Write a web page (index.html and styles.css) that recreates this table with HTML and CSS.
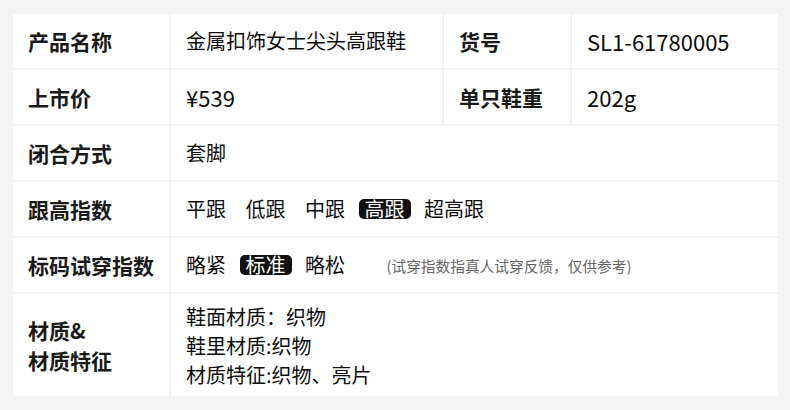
FILE: index.html
```html
<!DOCTYPE html>
<html lang="zh-CN">
<head>
<meta charset="utf-8">
<title>商品参数</title>
<link rel="stylesheet" href="styles.css">
</head>
<body>
<div class="page">
  <div class="table">
    <div class="cell label">产品名称</div>
    <div class="cell value">金属扣饰女士尖头高跟鞋</div>
    <div class="cell label">货号</div>
    <div class="cell value"><span class="num">SL1-61780005</span></div>

    <div class="cell label">上市价</div>
    <div class="cell value"><span class="num">¥539</span></div>
    <div class="cell label">单只鞋重</div>
    <div class="cell value"><span class="num">202g</span></div>

    <div class="cell label">闭合方式</div>
    <div class="cell value wide">套脚</div>

    <div class="cell label">跟高指数</div>
    <div class="cell value wide">
      <div class="options">
        <span class="opt">平跟</span>
        <span class="opt">低跟</span>
        <span class="opt">中跟</span>
        <span class="opt on">高跟</span>
        <span class="opt">超高跟</span>
      </div>
    </div>

    <div class="cell label">标码试穿指数</div>
    <div class="cell value wide">
      <div class="options">
        <span class="opt">略紧</span>
        <span class="opt on">标准</span>
        <span class="opt">略松</span>
        <span class="note">(试穿指数指真人试穿反馈，仅供参考)</span>
      </div>
    </div>

    <div class="cell label multi">材质&amp;<br>材质特征</div>
    <div class="cell value wide lines">
      <div>鞋面材质：织物</div>
      <div>鞋里材质:织物</div>
      <div>材质特征:织物、亮片</div>
    </div>
  </div>
</div>
</body>
</html>
```

FILE: styles.css
```css
html, body {
  margin: 0;
  padding: 0;
  background: #f3f3f3;
}

body {
  font-family: "Noto Sans CJK SC", "Noto Sans", sans-serif;
  color: #111;
}

.page {
  padding: 14px 12px 14px 13px;
}

.table {
  display: grid;
  grid-template-columns: 156px 271px 126px 206px;
  grid-template-rows: 54px 54px 54px 54px 54px 102px;
  gap: 2px;
  width: 765px;
}

.cell {
  background: #fff;
  display: flex;
  align-items: center;
  line-height: 1;
}

.label {
  padding-left: 15px;
  font-size: 21px;
  font-weight: bold;
  color: #1a1a1a;
}

.value {
  padding-left: 15px;
  font-size: 20px;
  font-weight: normal;
  color: #0d0d0d;
}

.num {
  font-size: 22px;
}

.wide {
  grid-column: 2 / 5;
}

.options {
  display: flex;
  align-items: center;
  gap: 7.5px;
  margin-left: -6px;
}

.opt {
  height: 20px;
  padding: 0 6px;
  border-radius: 5px;
  line-height: 20px;
}

.opt.on {
  background: #111;
  color: #fff;
}

.note {
  margin-left: 28px;
  font-size: 14.7px;
  color: #666;
  line-height: 1;
  padding-top: 3px;
}

.multi {
  line-height: 30px;
}

.lines {
  flex-direction: column;
  align-items: flex-start;
  justify-content: center;
  line-height: 29px;
}
```
